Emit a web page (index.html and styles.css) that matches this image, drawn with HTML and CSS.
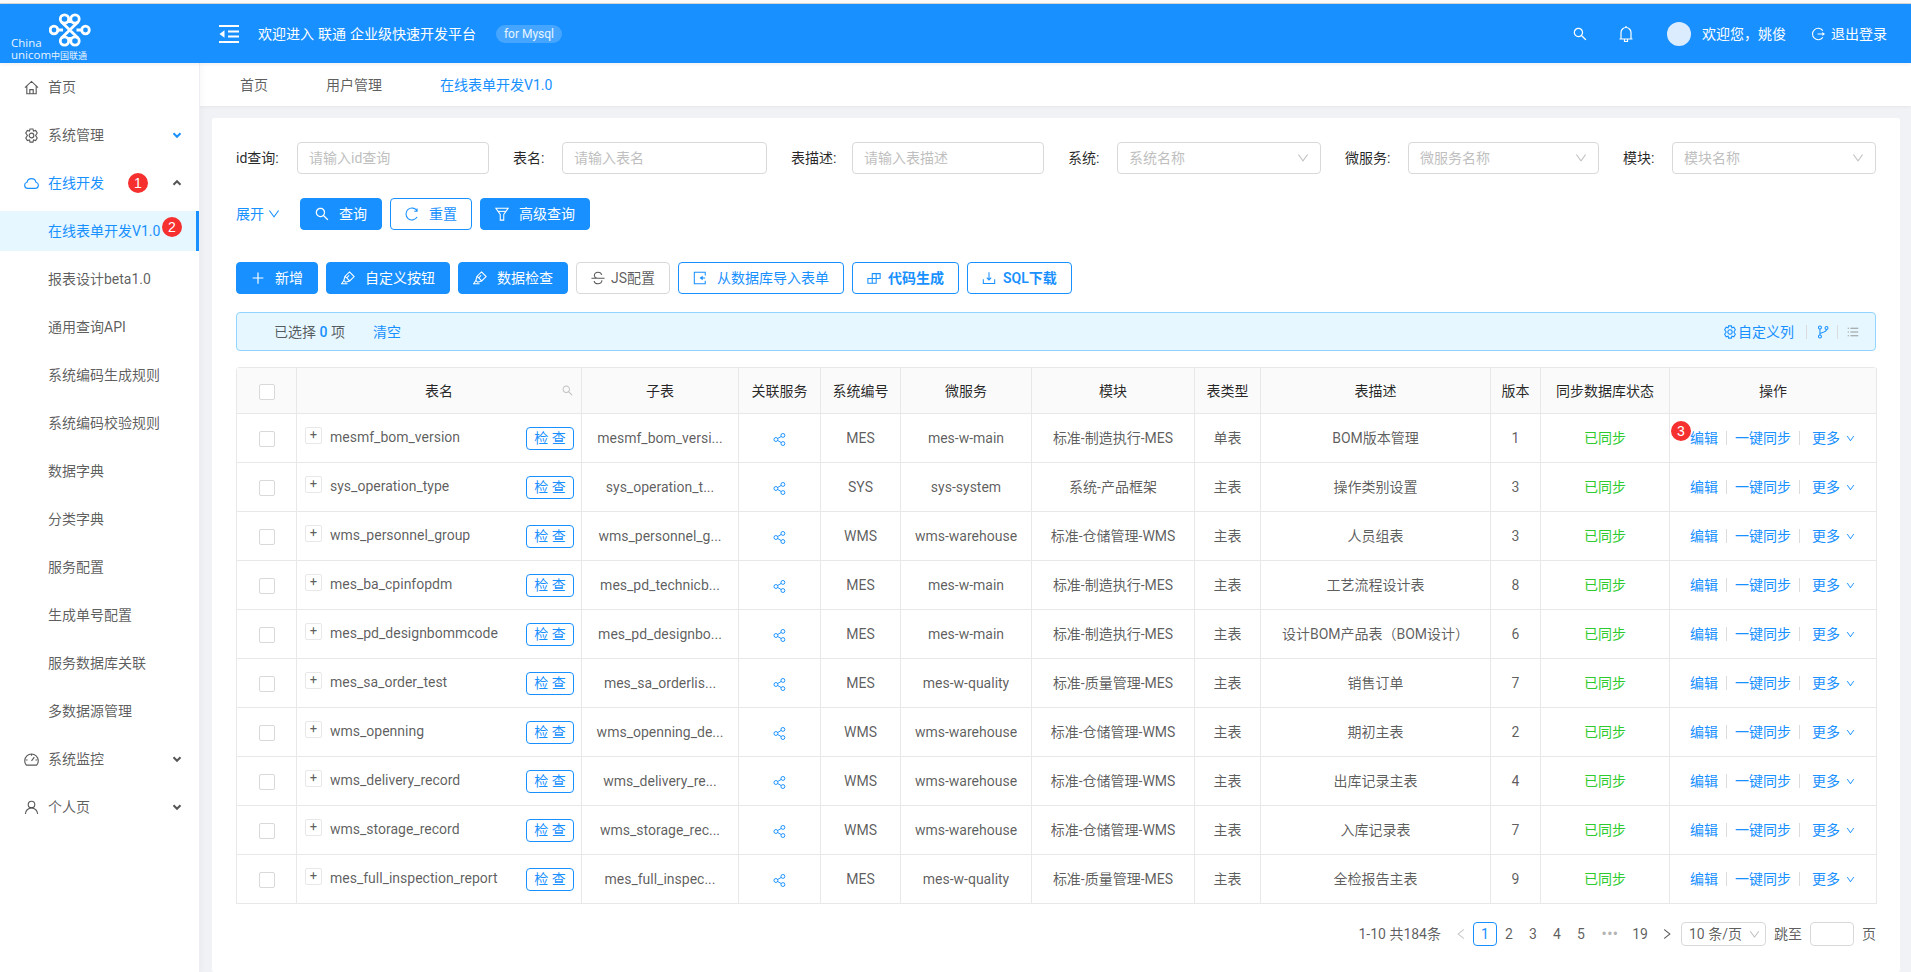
FILE: index.html
```html
<!DOCTYPE html>
<html lang="zh">
<head>
<meta charset="utf-8">
<title>在线表单开发</title>
<link rel="stylesheet" href="styles.css">
</head>
<body>
<svg class="defs" xmlns="http://www.w3.org/2000/svg">
  <symbol id="i-home" viewBox="0 0 16 16"><path d="M1 8.2L8 1.5l7 6.7M3 6.6v8h10v-8M6.2 14.6v-4.3h3.6v4.3"/></symbol>
  <symbol id="i-gear" viewBox="0 0 16 16"><path d="M6.4 1H9.6L10.1 3.2L12.4 2.5L14.1 5.4L12.4 8L14.1 10.6L12.4 13.5L10.1 12.8L9.6 15H6.4L5.9 12.8L3.6 13.5L1.9 10.6L3.6 8L1.9 5.4L3.6 2.5L5.9 3.2Z"/><circle cx="8" cy="8" r="2.5"/></symbol>
  <symbol id="i-cloud" viewBox="0 0 16 16"><path d="M4 13.2H12A3.3 3.3 0 0 0 12.8 6.7A4.9 4.9 0 0 0 3.2 6.7A3.3 3.3 0 0 0 4 13.2Z"/></symbol>
  <symbol id="i-dash" viewBox="0 0 16 16"><path d="M2.5 14A7.2 7.2 0 1 1 13.5 14ZM8 9.5L11 5.5M3.8 8.5H2M14 8.5H12.2M8 4V2.2"/></symbol>
  <symbol id="i-user" viewBox="0 0 16 16"><circle cx="8" cy="4.8" r="3.5"/><path d="M1.5 15A6.5 6.5 0 0 1 14.5 15"/></symbol>
  <symbol id="i-search" viewBox="64 64 896 896"><path class="solid" d="M909.6 854.5L649.9 594.8C690.2 542.7 712 479 712 412c0-80.2-31.3-155.4-87.9-212.1-56.6-56.7-132-87.9-212.1-87.9s-155.5 31.3-212.1 87.9C143.2 256.5 112 331.8 112 412c0 80.1 31.3 155.5 87.9 212.1C256.5 680.8 331.8 712 412 712c67 0 130.6-21.8 182.7-62l259.7 259.6a8.2 8.2 0 0 0 11.6 0l43.6-43.5a8.2 8.2 0 0 0 0-11.6zM570.4 570.4C528 612.7 471.8 636 412 636s-116-23.3-158.4-65.6C211.3 528 188 471.8 188 412s23.3-116.1 65.6-158.4C296 211.3 352.2 188 412 188s116.1 23.2 158.4 65.6S636 352.2 636 412s-23.3 116.1-65.6 158.4z"/></symbol>
  <symbol id="i-down" viewBox="64 64 896 896"><path class="solid" d="M884 256h-75c-5.1 0-9.9 2.5-12.9 6.6L512 654.2 227.9 262.6c-3-4.1-7.8-6.6-12.9-6.6h-75c-6.5 0-10.3 7.4-6.5 12.7l352.6 486.1c12.8 17.6 39 17.6 51.7 0l352.6-486.1c3.9-5.3.1-12.7-6.4-12.7z"/></symbol>
  <symbol id="i-chev" viewBox="0 0 10 10"><path class="thick" d="M1.5 3.2L5 6.8L8.5 3.2"/></symbol>
  <symbol id="i-left" viewBox="64 64 896 896"><path class="solid" d="M724 218.3V141c0-6.7-7.7-10.4-12.9-6.3L260.3 486.8a31.86 31.86 0 0 0 0 50.3l450.8 352.1c5.3 4.1 12.9.4 12.9-6.3v-77.3c0-4.9-2.3-9.6-6.1-12.6l-360-281 360-281.1c3.8-3 6.1-7.7 6.1-12.6z"/></symbol>
  <symbol id="i-right" viewBox="64 64 896 896"><path class="solid" d="M765.7 486.8L314.9 134.7A7.97 7.97 0 0 0 302 141v77.3c0 4.9 2.3 9.6 6.1 12.6l360 281.1-360 281.1c-3.9 3-6.1 7.7-6.1 12.6V883c0 6.7 7.7 10.4 12.9 6.3l450.8-352.1a31.96 31.96 0 0 0 0-50.4z"/></symbol>
  <symbol id="i-plus" viewBox="64 64 896 896"><path class="solid" d="M482 152h60q8 0 8 8v704q0 8-8 8h-60q-8 0-8-8V160q0-8 8-8z"/><path class="solid" d="M176 474h672q8 0 8 8v60q0 8-8 8H176q-8 0-8-8v-60q0-8 8-8z"/></symbol>
  <symbol id="i-bell" viewBox="0 0 16 18"><path d="M3 14V7.5A5 5 0 0 1 13 7.5V14ZM1.5 14H14.5M8 2.5V1M6.5 14V16.5H9.5V14"/></symbol>
  <symbol id="i-reload" viewBox="0 0 16 16"><path d="M13.8 4.5A6.8 6.8 0 1 0 13.8 11.5M13.8 1.6V4.8H10.6"/></symbol>
  <symbol id="i-filter" viewBox="0 0 16 16"><path d="M1 1.5H15L10 8.5V15H6V8.5Z"/><path d="M3.5 5H12.5"/></symbol>
  <symbol id="i-mark" viewBox="0 0 16 16"><path d="M9.7 1L15 6.3L10 11.3L4.7 6ZM4.7 6L3.2 10.8L5.2 12.8L10 11.3M6.5 7.8L9.3 5M3.2 10.8L.8 14.5H7.5"/></symbol>
  <symbol id="i-strike" viewBox="0 0 16 16"><path d="M.5 8.2H15.5M12.2 4.5C11.7 2.3 9.9 1.4 8 1.4 5.6 1.4 3.8 2.8 3.8 5 3.8 6.5 4.8 7.4 6.3 8M12.4 10.5C12.7 13.2 10.3 14.6 8 14.6 5.8 14.6 3.9 13.7 3.5 11.5"/></symbol>
  <symbol id="i-import" viewBox="0 0 16 16"><path d="M14 5V1.5H1.5V14.5H14V11M8.5 8H14M8.5 8L10.5 6.5V9.5Z"/></symbol>
  <symbol id="i-blocks" viewBox="0 0 16 16"><path d="M1 8.5H6V14H1ZM6 8.5H10.5V14H6ZM6 3H10.5V8.5H6ZM10.5 3H15V8.5H10.5Z"/></symbol>
  <symbol id="i-dl" viewBox="0 0 16 16"><path d="M8 1.5V10M5.5 7.5L8 10.3L10.5 7.5M1.5 9.5V14.2H14.5V9.5"/></symbol>
  <symbol id="i-share" viewBox="0 0 16 16"><circle cx="3.6" cy="8" r="2.4"/><circle cx="12.2" cy="3" r="2.4"/><circle cx="12.2" cy="13" r="2.4"/><path d="M5.7 6.8L10.1 4.2M5.7 9.2L10.1 11.8"/></symbol>
  <symbol id="i-branch" viewBox="0 0 16 16"><circle cx="4.5" cy="2.8" r="1.7"/><circle cx="4.5" cy="13.2" r="1.7"/><circle cx="12" cy="3.5" r="1.7"/><path d="M4.5 4.5V11.5M12 5.2C12 8 8 8.5 4.5 9.5"/></symbol>
  <symbol id="i-list" viewBox="0 0 16 16"><path d="M4.5 3H15M4.5 8H15M4.5 13H15M1 3H2.5M1 8H2.5M1 13H2.5"/></symbol>
  <symbol id="i-indent" viewBox="0 0 20 18"><path class="thick" d="M0 1H20M9 6.5H20M9 11.5H20M0 17H20"/><path class="solid" d="M5.5 5.2V12.8L0.5 9Z"/></symbol>
  <symbol id="i-logout" viewBox="0 0 16 16"><path d="M13.5 4.2A6.5 6.5 0 1 0 13.5 11.8M7.5 8H15M13 6.5L15 8L13 9.5"/></symbol>
</svg>

<div class="topline"></div>
<header class="header">
  <div class="logo">
    <svg class="knot" viewBox="0 0 42 34" xmlns="http://www.w3.org/2000/svg"><circle cx="15.5" cy="6" r="4.2"/><circle cx="26" cy="6" r="4.2"/><circle cx="15.5" cy="28" r="4.2"/><circle cx="26" cy="28" r="4.2"/><circle cx="5" cy="17" r="3.8"/><circle cx="36.5" cy="17" r="3.8"/><path d="M12.5 9L29 25M29 9L12.5 25M8.8 17H14M27.5 17H32.7M20.7 6V10M20.7 24V28"/></svg>
    <div class="logo-text"><span class="logo-china">China</span><span class="logo-uni">unicom<small>中国联通</small></span></div>
  </div>
  <svg class="ico ico-indent"><use href="#i-indent"/></svg>
  <span class="title">欢迎进入 联通 企业级快速开发平台</span>
  <span class="pill">for Mysql</span>
  <div class="header-right">
    <svg class="ico ico-h-search"><use href="#i-search"/></svg>
    <svg class="ico ico-h-bell"><use href="#i-bell"/></svg>
    <span class="avatar"></span>
    <span class="welcome">欢迎您，姚俊</span>
    <svg class="ico ico-h-out"><use href="#i-logout"/></svg>
    <span class="logout">退出登录</span>
  </div>
</header>

<div class="shell">
  <nav class="sidebar">
    <a class="nav-item"><svg class="ico nav-ico"><use href="#i-home"/></svg>首页</a>
    <a class="nav-item"><svg class="ico nav-ico"><use href="#i-gear"/></svg>系统管理<svg class="ico chev chev-blue"><use href="#i-chev"/></svg></a>
    <a class="nav-item is-open"><svg class="ico nav-ico"><use href="#i-cloud"/></svg>在线开发<svg class="ico chev chev-up"><use href="#i-chev"/></svg><span class="badge badge-1">1</span></a>
    <a class="nav-item sub is-active">在线表单开发V1.0<span class="badge badge-2">2</span></a>
    <a class="nav-item sub">报表设计beta1.0</a>
    <a class="nav-item sub">通用查询API</a>
    <a class="nav-item sub">系统编码生成规则</a>
    <a class="nav-item sub">系统编码校验规则</a>
    <a class="nav-item sub">数据字典</a>
    <a class="nav-item sub">分类字典</a>
    <a class="nav-item sub">服务配置</a>
    <a class="nav-item sub">生成单号配置</a>
    <a class="nav-item sub">服务数据库关联</a>
    <a class="nav-item sub">多数据源管理</a>
    <a class="nav-item"><svg class="ico nav-ico"><use href="#i-dash"/></svg>系统监控<svg class="ico chev"><use href="#i-chev"/></svg></a>
    <a class="nav-item"><svg class="ico nav-ico"><use href="#i-user"/></svg>个人页<svg class="ico chev"><use href="#i-chev"/></svg></a>
  </nav>

  <div class="content">
    <div class="tabs">
      <span class="tab">首页</span>
      <span class="tab">用户管理</span>
      <span class="tab is-current">在线表单开发V1.0</span>
    </div>
    <main class="main">
      <section class="card">
        <div class="filters">
          <div class="field"><label class="lbl">id查询:</label><div class="input ph">请输入id查询</div></div>
          <div class="field"><label class="lbl">表名:</label><div class="input ph">请输入表名</div></div>
          <div class="field"><label class="lbl">表描述:</label><div class="input ph">请输入表描述</div></div>
          <div class="field"><label class="lbl">系统:</label><div class="input ph">系统名称<svg class="ico sel-chev"><use href="#i-down"/></svg></div></div>
          <div class="field"><label class="lbl">微服务:</label><div class="input ph">微服务名称<svg class="ico sel-chev"><use href="#i-down"/></svg></div></div>
          <div class="field"><label class="lbl">模块:</label><div class="input ph">模块名称<svg class="ico sel-chev"><use href="#i-down"/></svg></div></div>
        </div>
        <div class="query-row">
          <a class="expand">展开<svg class="ico expand-chev"><use href="#i-down"/></svg></a>
          <button class="btn primary"><svg class="ico"><use href="#i-search"/></svg>查询</button>
          <button class="btn outline"><svg class="ico"><use href="#i-reload"/></svg>重置</button>
          <button class="btn primary"><svg class="ico"><use href="#i-filter"/></svg>高级查询</button>
        </div>
        <div class="tool-row">
          <button class="btn primary"><svg class="ico"><use href="#i-plus"/></svg>新增</button>
          <button class="btn primary"><svg class="ico"><use href="#i-mark"/></svg>自定义按钮</button>
          <button class="btn primary"><svg class="ico"><use href="#i-mark"/></svg>数据检查</button>
          <button class="btn ghost"><svg class="ico"><use href="#i-strike"/></svg>JS配置</button>
          <button class="btn outline"><svg class="ico"><use href="#i-import"/></svg>从数据库导入表单</button>
          <button class="btn outline bold"><svg class="ico"><use href="#i-blocks"/></svg>代码生成</button>
          <button class="btn outline bold"><svg class="ico"><use href="#i-dl"/></svg>SQL下载</button>
        </div>
        <div class="alert">
          <span class="sel">已选择 <b>0</b> 项</span>
          <a class="clear">清空</a>
          <div class="alert-right">
            <svg class="ico"><use href="#i-gear"/></svg><span>自定义列</span>
            <i class="vsep"></i>
            <svg class="ico"><use href="#i-branch"/></svg>
            <i class="vsep"></i>
            <svg class="ico ico-list"><use href="#i-list"/></svg>
          </div>
        </div>
        <div class="table-wrap">
          <table class="table">
            <colgroup>
              <col class="c1"><col class="c2"><col class="c3"><col class="c4"><col class="c5"><col class="c6"><col class="c7"><col class="c8"><col class="c9"><col class="c10"><col class="c11"><col class="c12">
            </colgroup>
            <thead>
              <tr>
                <th><span class="check"></span></th>
                <th class="th-name">表名<svg class="ico th-search"><use href="#i-search"/></svg></th>
                <th>子表</th><th>关联服务</th><th>系统编号</th><th>微服务</th><th>模块</th><th>表类型</th><th>表描述</th><th>版本</th><th>同步数据库状态</th><th>操作</th>
              </tr>
            </thead>
            <tbody>
              <tr><td><span class="check"></span></td><td><div class="name"><span class="plus">+</span><span class="name-txt">mesmf_bom_version</span><button class="chk">检 查</button></div></td><td>mesmf_bom_versi...</td><td><svg class="ico share"><use href="#i-share"/></svg></td><td>MES</td><td>mes-w-main</td><td>标准-制造执行-MES</td><td>单表</td><td>BOM版本管理</td><td>1</td><td class="ok">已同步</td><td><div class="ops"><a>编辑</a><i class="vsep"></i><a>一键同步</a><i class="vsep"></i><a>更多</a><svg class="ico more"><use href="#i-down"/></svg><span class="badge badge-3">3</span></div></td></tr>
              <tr><td><span class="check"></span></td><td><div class="name"><span class="plus">+</span><span class="name-txt">sys_operation_type</span><button class="chk">检 查</button></div></td><td>sys_operation_t...</td><td><svg class="ico share"><use href="#i-share"/></svg></td><td>SYS</td><td>sys-system</td><td>系统-产品框架</td><td>主表</td><td>操作类别设置</td><td>3</td><td class="ok">已同步</td><td><div class="ops"><a>编辑</a><i class="vsep"></i><a>一键同步</a><i class="vsep"></i><a>更多</a><svg class="ico more"><use href="#i-down"/></svg></div></td></tr>
              <tr><td><span class="check"></span></td><td><div class="name"><span class="plus">+</span><span class="name-txt">wms_personnel_group</span><button class="chk">检 查</button></div></td><td>wms_personnel_g...</td><td><svg class="ico share"><use href="#i-share"/></svg></td><td>WMS</td><td>wms-warehouse</td><td>标准-仓储管理-WMS</td><td>主表</td><td>人员组表</td><td>3</td><td class="ok">已同步</td><td><div class="ops"><a>编辑</a><i class="vsep"></i><a>一键同步</a><i class="vsep"></i><a>更多</a><svg class="ico more"><use href="#i-down"/></svg></div></td></tr>
              <tr><td><span class="check"></span></td><td><div class="name"><span class="plus">+</span><span class="name-txt">mes_ba_cpinfopdm</span><button class="chk">检 查</button></div></td><td>mes_pd_technicb...</td><td><svg class="ico share"><use href="#i-share"/></svg></td><td>MES</td><td>mes-w-main</td><td>标准-制造执行-MES</td><td>主表</td><td>工艺流程设计表</td><td>8</td><td class="ok">已同步</td><td><div class="ops"><a>编辑</a><i class="vsep"></i><a>一键同步</a><i class="vsep"></i><a>更多</a><svg class="ico more"><use href="#i-down"/></svg></div></td></tr>
              <tr><td><span class="check"></span></td><td><div class="name"><span class="plus">+</span><span class="name-txt">mes_pd_designbommcode</span><button class="chk">检 查</button></div></td><td>mes_pd_designbo...</td><td><svg class="ico share"><use href="#i-share"/></svg></td><td>MES</td><td>mes-w-main</td><td>标准-制造执行-MES</td><td>主表</td><td>设计BOM产品表（BOM设计）</td><td>6</td><td class="ok">已同步</td><td><div class="ops"><a>编辑</a><i class="vsep"></i><a>一键同步</a><i class="vsep"></i><a>更多</a><svg class="ico more"><use href="#i-down"/></svg></div></td></tr>
              <tr><td><span class="check"></span></td><td><div class="name"><span class="plus">+</span><span class="name-txt">mes_sa_order_test</span><button class="chk">检 查</button></div></td><td>mes_sa_orderlis...</td><td><svg class="ico share"><use href="#i-share"/></svg></td><td>MES</td><td>mes-w-quality</td><td>标准-质量管理-MES</td><td>主表</td><td>销售订单</td><td>7</td><td class="ok">已同步</td><td><div class="ops"><a>编辑</a><i class="vsep"></i><a>一键同步</a><i class="vsep"></i><a>更多</a><svg class="ico more"><use href="#i-down"/></svg></div></td></tr>
              <tr><td><span class="check"></span></td><td><div class="name"><span class="plus">+</span><span class="name-txt">wms_openning</span><button class="chk">检 查</button></div></td><td>wms_openning_de...</td><td><svg class="ico share"><use href="#i-share"/></svg></td><td>WMS</td><td>wms-warehouse</td><td>标准-仓储管理-WMS</td><td>主表</td><td>期初主表</td><td>2</td><td class="ok">已同步</td><td><div class="ops"><a>编辑</a><i class="vsep"></i><a>一键同步</a><i class="vsep"></i><a>更多</a><svg class="ico more"><use href="#i-down"/></svg></div></td></tr>
              <tr><td><span class="check"></span></td><td><div class="name"><span class="plus">+</span><span class="name-txt">wms_delivery_record</span><button class="chk">检 查</button></div></td><td>wms_delivery_re...</td><td><svg class="ico share"><use href="#i-share"/></svg></td><td>WMS</td><td>wms-warehouse</td><td>标准-仓储管理-WMS</td><td>主表</td><td>出库记录主表</td><td>4</td><td class="ok">已同步</td><td><div class="ops"><a>编辑</a><i class="vsep"></i><a>一键同步</a><i class="vsep"></i><a>更多</a><svg class="ico more"><use href="#i-down"/></svg></div></td></tr>
              <tr><td><span class="check"></span></td><td><div class="name"><span class="plus">+</span><span class="name-txt">wms_storage_record</span><button class="chk">检 查</button></div></td><td>wms_storage_rec...</td><td><svg class="ico share"><use href="#i-share"/></svg></td><td>WMS</td><td>wms-warehouse</td><td>标准-仓储管理-WMS</td><td>主表</td><td>入库记录表</td><td>7</td><td class="ok">已同步</td><td><div class="ops"><a>编辑</a><i class="vsep"></i><a>一键同步</a><i class="vsep"></i><a>更多</a><svg class="ico more"><use href="#i-down"/></svg></div></td></tr>
              <tr><td><span class="check"></span></td><td><div class="name"><span class="plus">+</span><span class="name-txt">mes_full_inspection_report</span><button class="chk">检 查</button></div></td><td>mes_full_inspec...</td><td><svg class="ico share"><use href="#i-share"/></svg></td><td>MES</td><td>mes-w-quality</td><td>标准-质量管理-MES</td><td>主表</td><td>全检报告主表</td><td>9</td><td class="ok">已同步</td><td><div class="ops"><a>编辑</a><i class="vsep"></i><a>一键同步</a><i class="vsep"></i><a>更多</a><svg class="ico more"><use href="#i-down"/></svg></div></td></tr>
            </tbody>
          </table>
        </div>
        <div class="pager">
          <span class="total">1-10 共184条</span>
          <svg class="ico pg-arrow pg-disabled"><use href="#i-left"/></svg>
          <span class="pg is-current">1</span><span class="pg">2</span><span class="pg">3</span><span class="pg">4</span><span class="pg">5</span>
          <span class="pg-dots">•••</span>
          <span class="pg">19</span>
          <svg class="ico pg-arrow pg-next"><use href="#i-right"/></svg>
          <div class="pg-select">10 条/页<svg class="ico pg-sel-chev"><use href="#i-down"/></svg></div>
          <span class="jump">跳至</span><span class="pg-input"></span><span class="jump">页</span>
        </div>
      </section>
    </main>
  </div>
</div>
</body>
</html>
```

FILE: styles.css
```css
* { box-sizing: border-box; }
html, body { margin: 0; height: 972px; overflow: hidden; }
body {
  width: 1911px;
  background: #fff;
  font-family: Roboto, "Noto Sans CJK SC", sans-serif;
  font-size: 14px;
  line-height: 22px;
  color: rgba(0, 0, 0, .65);
}
a { color: inherit; text-decoration: none; }
button { font: inherit; cursor: pointer; }
.defs { display: none; }

.ico { width: 14px; height: 14px; flex: none; fill: none; stroke: currentColor; stroke-width: 1.2; }
.solid { fill: currentColor; stroke: none; }
.thick { stroke-width: 2; }

.topline { height: 4px; background: #fafafa; border-bottom: 1px solid #d9d9d9; }

/* header */
.header {
  height: 59px;
  background: #1890ff;
  color: #fff;
  display: flex;
  align-items: center;
  position: relative;
  z-index: 2;
  box-shadow: 0 1px 4px rgba(0, 21, 41, .08);
}
.logo { width: 219px; flex: none; height: 59px; position: relative; }
.knot { position: absolute; left: 49px; top: 9px; width: 42px; height: 34px; fill: none; stroke: #fff; stroke-width: 2.8; }
.logo-text { position: absolute; left: 11px; top: 33px; color: #e8f3ff; font-family: "Open Sans", sans-serif; line-height: 12px; }
.logo-china, .logo-uni { display: block; font-size: 11.5px; }
.logo-uni small { font-family: "Noto Sans CJK SC", sans-serif; font-size: 9px; }
.ico-indent { width: 20px; height: 18px; color: #fff; }
.title { margin-left: 19px; word-spacing: .5px; }
.pill {
  margin-left: 20px;
  height: 18px;
  width: 66px;
  border-radius: 9px;
  background: rgba(255, 255, 255, .2);
  font-size: 12px;
  line-height: 18px;
  text-align: center;
  color: #e6f4ff;
}
.header-right { margin-left: auto; display: flex; align-items: center; padding-right: 24px; }
.ico-h-search { width: 14px; height: 14px; }
.ico-h-bell { width: 16px; height: 18px; margin-left: 31px; }
.avatar { width: 24px; height: 24px; border-radius: 50%; background: #dcecff; margin-left: 33px; }
.welcome { margin-left: 11px; }
.ico-h-out { margin-left: 25px; }
.logout { margin-left: 6px; }

/* sidebar */
.shell { display: flex; height: 909px; }
.sidebar {
  width: 200px;
  flex: none;
  padding-top: 4px;
  background: #fff;
  border-right: 1px solid #eceef2;
  box-shadow: 2px 0 6px rgba(0, 21, 41, .03);
  position: relative;
  z-index: 1;
}
.nav-item {
  display: flex;
  align-items: center;
  height: 40px;
  margin-bottom: 8px;
  padding-left: 24px;
  position: relative;
}
.nav-item.sub { padding-left: 48px; }
.nav-ico { width: 15px; height: 15px; margin-right: 9px; }
.is-open { color: #1890ff; }
.nav-item.is-active { color: #1890ff; background: #e6f7ff; border-right: 3px solid #1890ff; }
.chev { position: absolute; left: 172px; top: 15px; width: 10px; height: 10px; color: #555; }
.chev-blue { color: #1890ff; }
.chev-up { transform: rotate(180deg); color: #555; }
.badge {
  position: absolute;
  width: 20px;
  height: 20px;
  border-radius: 50%;
  background: #f5302f;
  color: #fff;
  font-size: 14px;
  line-height: 20px;
  text-align: center;
  font-family: "Liberation Sans", sans-serif;
}
.badge-1 { left: 128px; top: 10px; }
.badge-2 { left: 162px; top: 6px; }
.badge-3 { left: 1px; top: -6px; }

/* tabs */
.content { flex: 1; min-width: 0; background: #f0f2f5; display: flex; flex-direction: column; }
.tabs { height: 43px; background: #fff; display: flex; align-items: center; padding-left: 40px; gap: 58px; box-shadow: 0 1px 3px rgba(0, 21, 41, .05); }
.tab.is-current { color: #1890ff; }
.main { flex: 1; padding: 12px 11px 0 12px; }
.card { height: 100%; background: #fff; border-radius: 2px; padding: 24px 24px 0; }

/* filters */
.filters { display: flex; height: 32px; }
.field { display: flex; width: 253px; margin-right: 24px; flex: none; }
.field:nth-child(2), .field:nth-child(5) { width: 254px; }
.field:nth-child(6) { margin-right: 0; }
.lbl { width: 61px; flex: none; line-height: 32px; color: rgba(0, 0, 0, .85); }
.field:nth-child(even) .lbl { width: 49px; }
.field:nth-child(5) .lbl { width: 63px; }
.input {
  flex: 1;
  height: 32px;
  border: 1px solid #d9d9d9;
  border-radius: 4px;
  padding: 0 11px;
  line-height: 30px;
  position: relative;
}
.ph { color: #bfbfbf; }
.sel-chev { position: absolute; right: 11px; top: 9px; width: 12px; height: 12px; color: #bfbfbf; }

.btn {
  height: 32px;
  border-radius: 4px;
  border: 1px solid #1890ff;
  padding: 0 14px;
  display: inline-flex;
  align-items: center;
  gap: 10px;
  line-height: 30px;
  white-space: nowrap;
}
.primary { background: #1890ff; color: #fff; }
.outline { background: #fff; color: #1890ff; }
.ghost { background: #fff; border-color: #d9d9d9; color: rgba(0, 0, 0, .65); gap: 6px; }
.bold { font-weight: 600; gap: 7px; }
.query-row { display: flex; align-items: center; gap: 8px; margin-top: 24px; }
.expand { width: 56px; color: #1890ff; display: flex; align-items: center; gap: 4px; }
.expand-chev { width: 12px; height: 12px; }
.tool-row { display: flex; gap: 8px; margin-top: 32px; }

/* alert */
.alert {
  display: flex;
  align-items: center;
  height: 39px;
  margin-top: 18px;
  padding: 0 16px 0 37px;
  background: #e6f7ff;
  border: 1px solid #91d5ff;
  border-radius: 4px;
}
.sel b { color: #1890ff; font-weight: 500; }
.clear { margin-left: 28px; color: #1890ff; }
.alert-right { margin-left: auto; display: flex; align-items: center; color: #1890ff; }
.alert-right span { margin: 0 4px 0 1px; }
.alert-right .vsep { margin: 0 9px 0 8px; }
.alert-right .vsep ~ .vsep { margin-left: 7px; }
.ico-list { width: 12px; height: 12px; color: #8c8c8c; }
.vsep { display: inline-block; width: 1px; height: 14px; background: #dcdcdc; flex: none; }

/* table */
.table-wrap { margin-top: 16px; }
.table { width: 1640px; table-layout: fixed; border-collapse: separate; border-spacing: 0; border-top: 1px solid #e8e8e8; border-left: 1px solid #e8e8e8; border-radius: 4px 4px 0 0; }
.c1 { width: 60px; } .c2 { width: 285px; } .c3 { width: 157px; } .c4 { width: 82px; }
.c5 { width: 80px; } .c6 { width: 131px; } .c7 { width: 163px; } .c8 { width: 66px; }
.c9 { width: 230px; } .c10 { width: 50px; } .c11 { width: 129px; } .c12 { width: 207px; }
.table th, .table td {
  border-right: 1px solid #e8e8e8;
  border-bottom: 1px solid #e8e8e8;
  text-align: center;
  padding: 0;
  white-space: nowrap;
  overflow: hidden;
}
.table th { height: 46px; background: #fafafa; font-weight: 400; color: rgba(0, 0, 0, .85); }
.table td { height: 49px; }
.table tr:first-child td:last-child { overflow: visible; }
.th-name { position: relative; }
.th-search { position: absolute; right: 8px; top: 17px; width: 11px; height: 11px; color: #bfbfbf; }
.check { display: inline-block; width: 16px; height: 16px; border: 1px solid #d9d9d9; border-radius: 2px; background: #fff; vertical-align: middle; }
.name { display: flex; align-items: center; padding: 0 7px 0 8px; text-align: left; }
.plus {
  width: 17px; height: 17px; flex: none;
  border: 1px solid #e8e8e8; border-radius: 2px; background: #fff;
  font-size: 13px; line-height: 13px; text-align: center; margin: -6px 8px 0 0;
}
.name-txt { flex: 1; margin-top: -2px; overflow: hidden; }
.chk { width: 48px; height: 23px; flex: none; background: #fff; border: 1px solid #1890ff; border-radius: 4px; color: #1890ff; padding: 0; line-height: 21px; }
.share { width: 13px; height: 13px; color: #1890ff; vertical-align: middle; }
.ok { color: #2ecb2e; }
.ops { display: flex; align-items: center; padding-left: 20px; color: #1890ff; position: relative; }
.ops .vsep { margin: 0 8px; }
.ops .vsep:nth-of-type(2) { margin: 0 12px 0 8px; }
.more { width: 9px; height: 9px; margin-left: 6px; }

/* pager */
.pager { display: flex; align-items: center; height: 24px; margin-top: 18px; justify-content: flex-end; }
.total { margin-right: 14px; }
.pg-arrow { width: 12px; height: 12px; color: #595959; }
.pg-disabled { color: #c8c8c8; margin-right: 6px; }
.pg-next { margin: 0 8px 0 9px; }
.pg { width: 24px; height: 24px; text-align: center; border-radius: 4px; border: 1px solid transparent; line-height: 22px; }
.pg.is-current { border-color: #1890ff; color: #1890ff; }
.pg-dots { width: 35px; text-align: center; color: #b4b4b4; font-family: "Liberation Sans", sans-serif; font-size: 12px; letter-spacing: 1.5px; }
.pg-select { width: 85px; height: 24px; border: 1px solid #d9d9d9; border-radius: 4px; padding-left: 7px; line-height: 22px; position: relative; white-space: nowrap; }
.pg-sel-chev { position: absolute; right: 5px; top: 6px; width: 11px; height: 11px; color: #bfbfbf; }
.jump { margin-left: 8px; }
.pg-input { width: 44px; height: 24px; border: 1px solid #d9d9d9; border-radius: 4px; margin-left: 8px; }
```
